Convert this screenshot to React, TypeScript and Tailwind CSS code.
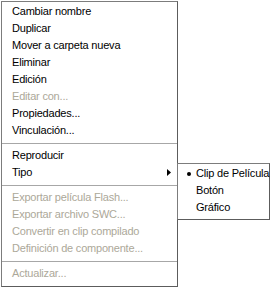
import React from 'react';

type Item = { label: string; disabled?: boolean; submenu?: boolean } | 'sep';

const items: Item[] = [
    { label: 'Cambiar nombre' },
    { label: 'Duplicar' },
    { label: 'Mover a carpeta nueva' },
    { label: 'Eliminar' },
    { label: 'Edición' },
    { label: 'Editar con...', disabled: true },
    { label: 'Propiedades...' },
    { label: 'Vinculación...' },
    'sep',
    { label: 'Reproducir' },
    { label: 'Tipo', submenu: true },
    'sep',
    { label: 'Exportar película Flash...', disabled: true },
    { label: 'Exportar archivo SWC...', disabled: true },
    { label: 'Convertir en clip compilado', disabled: true },
    { label: 'Definición de componente...', disabled: true },
    'sep',
    { label: 'Actualizar...', disabled: true },
];

const subItems = [
    { label: 'Clip de Película', checked: true },
    { label: 'Botón' },
    { label: 'Gráfico' },
];

export default function App() {
    return (
        <div className="relative w-[271px] h-[288px] bg-white overflow-hidden font-['Liberation_Sans',Arial,sans-serif] text-[11px] tracking-[-0.2px] text-black">
            {/* Main context menu */}
            <div className="ml-px mt-px w-[177px] h-[286px] bg-white border border-t-[#7c7c7c] border-l-[#7c7c7c] border-r-[#5c5c5c] border-b-[#5c5c5c] pt-px overflow-hidden">
                {items.map((item, i) =>
                    item === 'sep' ? (
                        <div key={i} className="h-[8px] flex items-center">
                            <div className="w-full h-px bg-[#a7a7a7]" />
                        </div>
                    ) : (
                        <div
                            key={i}
                            className={`h-[17px] leading-[17px] pl-[10px] pr-[6px] flex items-center justify-between whitespace-nowrap ${item.disabled ? 'text-[#aca899]' : ''}`}
                        >
                            <span>{item.label}</span>
                            {item.submenu && (
                                <svg width="4" height="7" viewBox="0 0 4 7">
                                    <path d="M0 0 L4 3.5 L0 7 Z" fill="#000" />
                                </svg>
                            )}
                        </div>
                    )
                )}
            </div>

            {/* Tipo submenu */}
            <div className="absolute left-[177px] top-[163px] w-[93px] h-[57px] bg-white border border-t-[#7c7c7c] border-l-[#7c7c7c] border-r-[#5c5c5c] border-b-[#5c5c5c] pt-px">
                {subItems.map((s, i) => (
                    <div key={i} className="h-[17px] leading-[17px] pl-[18px] relative whitespace-nowrap">
                        {s.checked && (
                            <div className="absolute left-[9px] top-[7px] w-[4px] h-[4px] rounded-full bg-black" />
                        )}
                        {s.label}
                    </div>
                ))}
            </div>
        </div>
    );
}
